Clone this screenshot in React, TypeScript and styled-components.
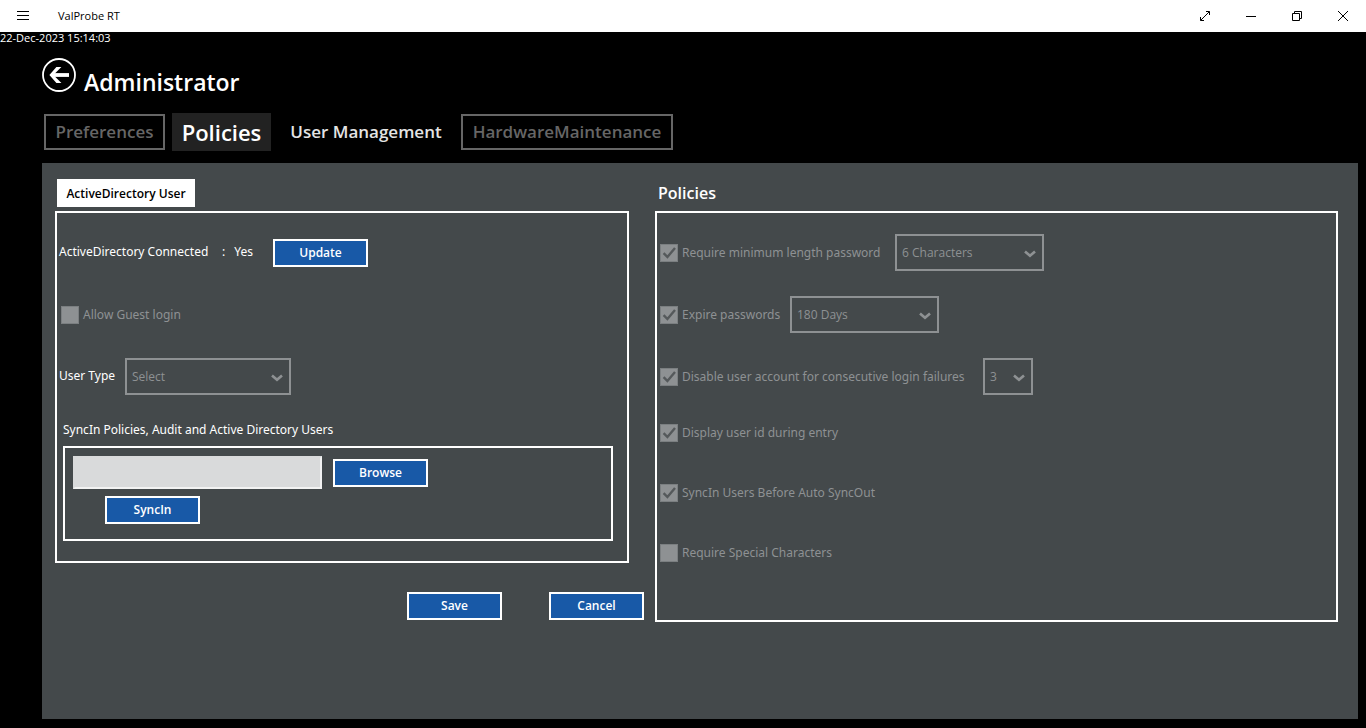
import React, { useState } from "react";
import styled, { createGlobalStyle } from "styled-components";

const colors = {
  panel: "#44494b",
  accent: "#1859a7",
  muted: "#8e9193",
  tick: "#55595b",
  tabMuted: "#666666",
};

const GlobalStyle = createGlobalStyle`
  *, *::before, *::after { box-sizing: border-box; }
  body { margin: 0; background: #000; }
  body, button, input, select { font-family: "Segoe UI", "Open Sans", "Noto Sans", sans-serif; }
`;

const Page = styled.div`
  min-height: 100vh;
  display: flex;
  flex-direction: column;
  background: #000;
  color: #fff;
  font-size: 12px;
  line-height: 18px;
`;

const TitleBar = styled.header`
  display: flex;
  align-items: center;
  height: 32px;
  background: #fff;
  color: #000;
`;

const TitleButton = styled.button`
  display: flex;
  align-items: center;
  justify-content: center;
  width: 46px;
  height: 32px;
  padding: 0;
  border: 0;
  background: transparent;
  color: #000;
`;

const AppName = styled.span`
  flex: 1;
  padding-left: 12px;
  font-size: 11px;
  line-height: 16px;
`;

const Clock = styled.time`
  font-size: 11px;
  line-height: 12px;
`;

const Heading = styled.div`
  display: flex;
  gap: 8px;
  padding: 10px 0 0 42px;
  height: 69px;
  align-items: flex-start;
`;

const BackButton = styled.button`
  display: flex;
  width: 34px;
  height: 34px;
  margin-top: 4px;
  padding: 0;
  border: 0;
  background: transparent;
  color: #fff;
`;

const Title = styled.h1`
  margin: 12px 0 0;
  font-size: 23px;
  font-weight: 600;
  line-height: 32px;
`;

const Tabs = styled.nav`
  display: flex;
  align-items: center;
  height: 38px;
  padding-left: 44px;
`;

const Tab = styled.button<{ $kind: "disabled" | "active" | "plain"; $width: number }>`
  width: ${(p) => p.$width}px;
  height: ${(p) => (p.$kind === "active" ? 38 : 36)}px;
  margin-right: 7px;
  padding: 0;
  border: ${(p) => (p.$kind === "disabled" ? `2px solid ${colors.tabMuted}` : "0")};
  background: ${(p) => (p.$kind === "active" ? "#222" : "transparent")};
  color: ${(p) => (p.$kind === "disabled" ? colors.tabMuted : p.$kind === "active" ? "#fff" : "#e4e4e4")};
  font-size: ${(p) => (p.$kind === "active" ? 22 : 17)}px;
  font-weight: 600;
  line-height: 28px;
  white-space: nowrap;
`;

const Panel = styled.main`
  flex: 1;
  display: flex;
  align-items: flex-start;
  margin: 12px 8px 9px 42px;
  padding: 16px 20px 16px 13px;
  background: ${colors.panel};
`;

const LeftColumn = styled.section`
  flex: 0 0 600px;
`;

const RightColumn = styled.section`
  flex: 1;
  min-width: 0;
`;

const ColumnHead = styled.div`
  display: flex;
  align-items: center;
  height: 32px;
  padding: 0 0 4px 2px;
`;

const SectionTab = styled.button`
  width: 138px;
  height: 28px;
  padding: 0;
  border: 0;
  background: #fff;
  color: #000;
  font-size: 12px;
  font-weight: 600;
`;

const SectionTitle = styled.h2`
  margin: 0;
  padding-left: 1px;
  font-size: 16px;
  font-weight: 600;
  line-height: 24px;
`;

const UserBox = styled.div`
  margin-right: 26px;
  padding: 26px 14px 20px 2px;
  border: 2px solid #fff;
  font-family: "Segoe UI", "Noto Sans", sans-serif;
`;

const PolicyBox = styled.div`
  padding: 21px 3px 37px;
  border: 2px solid #fff;
  font-family: "Segoe UI", "Noto Sans", sans-serif;
`;

const Row = styled.div<{ $height: number; $gap?: number; $after?: number; $indent?: number }>`
  display: flex;
  align-items: center;
  min-height: ${(p) => p.$height}px;
  gap: ${(p) => p.$gap ?? 0}px;
  margin-bottom: ${(p) => p.$after ?? 0}px;
  padding-left: ${(p) => p.$indent ?? 0}px;
`;

const Status = styled.div`
  display: flex;
  gap: 9px;
  width: 214px;
  padding-bottom: 2px;
`;

const StatusName = styled.span`
  width: 154px;
`;

const FieldLabel = styled.label`
  width: 66px;
  padding-bottom: 2px;
`;

const ActionButton = styled.button`
  width: 95px;
  height: 28px;
  padding: 0;
  border: 2px solid #fff;
  background: ${colors.accent};
  color: #fff;
  font-size: 12px;
  font-weight: 600;
  line-height: 16px;
`;

const CheckLabel = styled.label<{ $width?: number }>`
  display: flex;
  align-items: center;
  gap: 4px;
  min-width: ${(p) => p.$width ?? 0}px;
  color: ${colors.muted};
  white-space: nowrap;
`;

const CheckHolder = styled.span`
  position: relative;
  display: flex;
`;

const CheckInput = styled.input`
  appearance: none;
  width: 18px;
  height: 18px;
  margin: 0;
  border: 1px solid #7b7f81;
  background: ${colors.muted};
`;

const Overlay = styled.svg`
  position: absolute;
  pointer-events: none;
`;

const Tick = styled(Overlay)`
  inset: 0;
`;

const Chevron = styled(Overlay)`
  right: 8px;
  top: 16px;
`;

const SelectHolder = styled.span<{ $width: number }>`
  position: relative;
  display: flex;
  width: ${(p) => p.$width}px;
`;

const SelectInput = styled.select`
  appearance: none;
  width: 100%;
  height: 37px;
  padding: 0 5px;
  border: 2px solid ${colors.muted};
  border-radius: 0;
  background: transparent;
  color: ${colors.muted};
  font-size: 12px;
  opacity: 1;
`;

const SyncTitle = styled.h3`
  margin: 0;
  padding: 1px 0 7px 4px;
  font-size: 12px;
  font-weight: 400;
  line-height: 18px;
`;

const SyncBox = styled.div`
  margin-left: 4px;
  padding: 8px 8px 15px;
  border: 2px solid #fff;
`;

const PathInput = styled.input`
  width: 249px;
  height: 33px;
  padding: 4px 8px;
  border: 2px solid #d9dadb;
  border-right-color: #f2f2f2;
  border-bottom-color: #f2f2f2;
  background: #d9dadb;
  font-size: 12px;
`;

const SyncAction = styled.div`
  padding: 7px 0 0 32px;
  display: flex;
`;

const Footer = styled.div`
  display: flex;
  justify-content: flex-end;
  gap: 47px;
  padding: 29px 11px 0 0;
`;

function Check({ label, checked: initial, width }: { label: string; checked?: boolean; width?: number }) {
  return (
    <CheckLabel $width={width}>
      <CheckHolder>
        <CheckInput type="checkbox" defaultChecked={initial} disabled />
        {initial && (
          <Tick width="18" height="18" viewBox="0 0 18 18" fill="none" stroke={colors.tick} strokeWidth="2.4">
            <path d="M3.6 9.2 7.4 13 15 4" />
          </Tick>
        )}
      </CheckHolder>
      {label}
    </CheckLabel>
  );
}

function Dropdown({ id, name, width, value }: { id: string; name: string; width: number; value: string }) {
  return (
    <SelectHolder $width={width}>
      <SelectInput id={id} aria-label={name} disabled defaultValue={value}>
        <option>{value}</option>
      </SelectInput>
      <Chevron width="12" height="9" viewBox="0 0 12 9" fill="none" stroke={colors.muted} strokeWidth="2.6">
        <path d="M1 1.4 6 5.8 11 1.4" />
      </Chevron>
    </SelectHolder>
  );
}

export default function App() {
  const [path, setPath] = useState("");
  return (
    <Page>
      <GlobalStyle />
      <TitleBar>
        <TitleButton aria-label="Menu">
          <svg width="12" height="10" viewBox="0 0 12 10" stroke="currentColor" shapeRendering="crispEdges">
            <path d="M0 .5h12M0 4.5h12M0 8.5h12" />
          </svg>
        </TitleButton>
        <AppName>ValProbe RT</AppName>
        <TitleButton aria-label="Full screen">
          <svg width="10" height="10" viewBox="0 0 10 10" fill="none" stroke="currentColor">
            <path d="M.7 9.3 9.3.7M6 .5h3.5V4M.5 6v3.5H4" />
          </svg>
        </TitleButton>
        <TitleButton aria-label="Minimize">
          <svg width="10" height="10" viewBox="0 0 10 10" fill="none" stroke="currentColor">
            <path d="M0 5.5h10" />
          </svg>
        </TitleButton>
        <TitleButton aria-label="Restore">
          <svg width="10" height="10" viewBox="0 0 10 10" fill="none" stroke="currentColor">
            <path d="M.5 2.5h7v7h-7zM2.5 2.5v-2h7v7h-2" />
          </svg>
        </TitleButton>
        <TitleButton aria-label="Close">
          <svg width="10" height="10" viewBox="0 0 10 10" fill="none" stroke="currentColor">
            <path d="M0 0 10 10M10 0 0 10" />
          </svg>
        </TitleButton>
      </TitleBar>

      <Clock>22-Dec-2023 15:14:03</Clock>

      <Heading>
        <BackButton aria-label="Back">
          <svg width="34" height="34" viewBox="0 0 34 34" fill="none" stroke="currentColor">
            <circle cx="17" cy="17" r="16" strokeWidth="1.8" />
            <path d="M9.5 17H27" strokeWidth="3.8" />
            <path d="M14.4 9H19.4l-8 8 8 8h-5L7.4 17z" fill="currentColor" stroke="none" />
          </svg>
        </BackButton>
        <Title>Administrator</Title>
      </Heading>

      <Tabs>
        <Tab $kind="disabled" $width={121} disabled>Preferences</Tab>
        <Tab $kind="active" $width={99}>Policies</Tab>
        <Tab $kind="plain" $width={176}>User Management</Tab>
        <Tab $kind="disabled" $width={212} disabled>HardwareMaintenance</Tab>
      </Tabs>

      <Panel>
        <LeftColumn>
          <ColumnHead>
            <SectionTab>ActiveDirectory User</SectionTab>
          </ColumnHead>
          <UserBox>
            <Row $height={28} $after={39}>
              <Status>
                <StatusName>ActiveDirectory Connected</StatusName>
                <span>:</span>
                <span>Yes</span>
              </Status>
              <ActionButton>Update</ActionButton>
            </Row>
            <Row $height={18} $after={34} $indent={2}>
              <Check label="Allow Guest login" />
            </Row>
            <Row $height={37} $after={25}>
              <FieldLabel htmlFor="user-type">User Type</FieldLabel>
              <Dropdown id="user-type" name="User Type" width={166} value="Select" />
            </Row>
            <SyncTitle>SyncIn Policies, Audit and Active Directory Users</SyncTitle>
            <SyncBox>
              <Row $height={33} $gap={11}>
                <PathInput aria-label="File path" value={path} onChange={(e) => setPath(e.target.value)} />
                <ActionButton>Browse</ActionButton>
              </Row>
              <SyncAction>
                <ActionButton>SyncIn</ActionButton>
              </SyncAction>
            </SyncBox>
          </UserBox>
          <Footer>
            <ActionButton>Save</ActionButton>
            <ActionButton>Cancel</ActionButton>
          </Footer>
        </LeftColumn>

        <RightColumn>
          <ColumnHead>
            <SectionTitle>Policies</SectionTitle>
          </ColumnHead>
          <PolicyBox>
            <Row $height={37} $after={25}>
              <Check label="Require minimum length password" checked width={235} />
              <Dropdown id="min-length" name="Minimum password length" width={149} value="6 Characters" />
            </Row>
            <Row $height={37} $after={25}>
              <Check label="Expire passwords" checked width={130} />
              <Dropdown id="expiry" name="Password expiry" width={149} value="180 Days" />
            </Row>
            <Row $height={37} $after={8}>
              <Check label="Disable user account for consecutive login failures" checked width={323} />
              <Dropdown id="failures" name="Login failures" width={50} value="3" />
            </Row>
            <Row $height={60}>
              <Check label="Display user id during entry" checked />
            </Row>
            <Row $height={60}>
              <Check label="SyncIn Users Before Auto SyncOut" checked />
            </Row>
            <Row $height={60}>
              <Check label="Require Special Characters" />
            </Row>
          </PolicyBox>
        </RightColumn>
      </Panel>
    </Page>
  );
}
